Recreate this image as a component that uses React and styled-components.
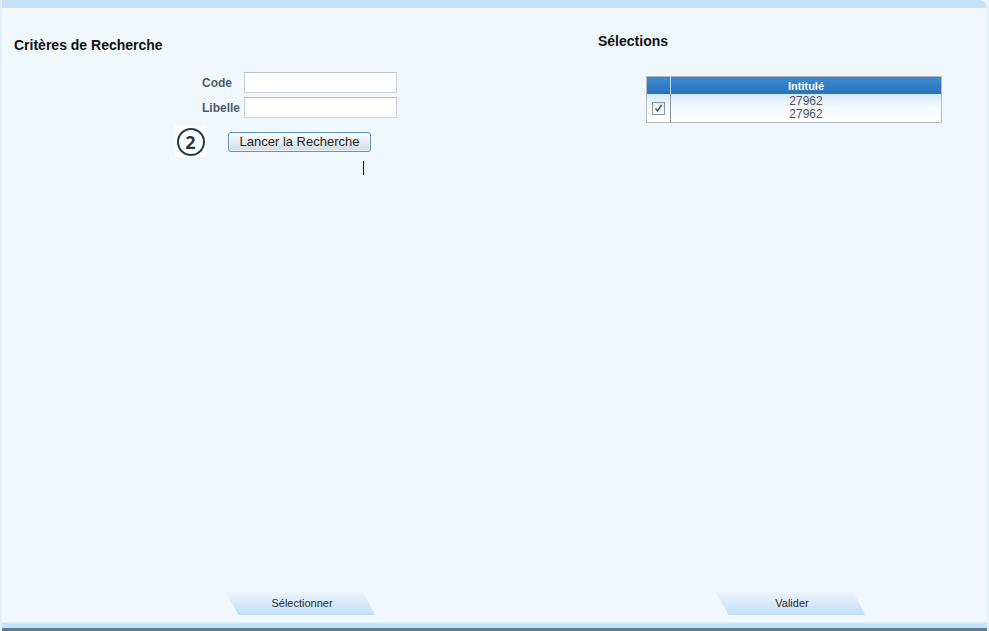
import React from 'react';
import styled, { createGlobalStyle } from 'styled-components';

const Global = createGlobalStyle`
  html, body {
    margin: 0;
    padding: 0;
    overflow: hidden;
    background: #f0f7fd;
  }
  body {
    font-family: "Liberation Sans", Arial, sans-serif;
  }
`

const Frame = styled.div`
  width: 989px;
  height: 631px;
  display: flex;
  flex-direction: column;
  background: #f0f7fd;
  box-sizing: border-box;
  border-left: 2px solid #e2eef8;
  border-right: 2px solid #e6f1fa;
`

const TopBand = styled.div`
  height: 8px;
  flex: none;
  background: #c4e1f7;
  border-bottom: 1px solid #f8fcff;
  border-top-right-radius: 8px;
`

const Content = styled.div`
  flex: 1;
  display: grid;
  grid-template-columns: 584px 1fr;
  position: relative;
`

const Column = styled.div`
  padding: ${p => p.$top}px 0 0 12px;
  position: relative;
`

const Title = styled.h2`
  margin: 0;
  font-size: 14px;
  line-height: 16px;
  font-weight: 700;
  color: #111;
`

const Form = styled.div`
  margin: 19px 0 0 188px;
  display: flex;
  flex-direction: column;
  gap: 4px;
`

const Row = styled.div`
  display: flex;
  align-items: center;
`

const Label = styled.label`
  width: 42px;
  font-size: 12px;
  font-weight: 700;
  color: #505c68;
`

const Input = styled.input`
  width: 153px;
  height: 21px;
  box-sizing: border-box;
  border: 1px solid #c9d1d8;
  border-top-color: #b9c2ca;
  background: #fff;
  margin: 0;
  padding: 0 3px;
`

const ActionRow = styled.div`
  display: flex;
  align-items: center;
  gap: 22px;
  margin: 4px 0 0 -27px;
`

const Step = styled.div`
  width: 31px;
  height: 31px;
  background: #fff;
  display: flex;
  align-items: center;
  justify-content: center;
`

const StepCircle = styled.span`
  width: 28px;
  height: 28px;
  box-sizing: border-box;
  border: 2.5px solid #233a4d;
  border-radius: 50%;
  display: flex;
  align-items: center;
  justify-content: center;
  font-family: "Open Sans", "Liberation Sans", sans-serif;
  font-weight: 700;
  font-size: 18px;
  line-height: 1;
  color: #233a4d;
`

const SearchButton = styled.button`
  width: 143px;
  height: 20px;
  box-sizing: border-box;
  padding: 0;
  border: 1px solid #5f95b8;
  border-radius: 3px;
  background: linear-gradient(#fbfcfd, #e6ebef 55%, #d4dce3);
  font-family: "Liberation Sans", Arial, sans-serif;
  font-size: 13px;
  color: #1e1e1e;
  box-shadow: inset 0 0 0 1px #eef5fa;
`

const Caret = styled.div`
  position: absolute;
  left: 361px;
  top: 152px;
  width: 1px;
  height: 14px;
  background: #111;
`

const Table = styled.table`
  margin: 27px 0 0 48px;
  width: 296px;
  border-collapse: collapse;
  border: 1px solid #b5bcc3;
  font-family: "Liberation Sans", Arial, sans-serif;
`

const Th = styled.th`
  height: 17px;
  padding: 0;
  background: linear-gradient(#3d8bd1, #2671bb);
  color: #fff;
  font-size: 11px;
  font-weight: 700;
  border-left: ${p => (p.$sep ? '1px solid #bfe2fb' : '0')};
  width: ${p => (p.$w ? `${p.$w}px` : 'auto')};
`

const Td = styled.td`
  height: 28px;
  padding: 0;
  text-align: center;
  vertical-align: middle;
  background: linear-gradient(#d5e8f7, #f3f9fd 45%, #fff);
  border-left: ${p => (p.$sep ? '1px solid #8a9299' : '0')};
  font-size: 12px;
  line-height: 13px;
  color: #555;
`

const Check = styled.span`
  display: inline-flex;
  width: 13px;
  height: 13px;
  box-sizing: border-box;
  border: 1px solid #8d959c;
  background: linear-gradient(#e6e9ec, #fafbfc);
  align-items: center;
  justify-content: center;
  vertical-align: middle;
`

const Footer = styled.div`
  flex: none;
  display: flex;
  padding-left: 223px;
  gap: 340px;
  height: 24px;
  margin-bottom: 7px;
`

const Slant = styled.div`
  width: 150px;
  height: 24px;
  clip-path: polygon(0 0, 92% 0, 100% 100%, 9% 100%);
  background: linear-gradient(#eef6fd, #d7eafa 50%, #c3dff6);
  display: flex;
  align-items: center;
  justify-content: center;
  padding-left: 4px;
  box-sizing: border-box;
  font-size: 11px;
  color: #2b2b2b;
`

const BottomBand = styled.div`
  flex: none;
  height: 5px;
  background: #c9e3f7;
  border-top: 1px solid #deeefb;
`

const BottomLine = styled.div`
  flex: none;
  height: 3px;
  background: #5c7b91;
`

const CheckMark = () => (
  <svg width="9" height="9" viewBox="0 0 9 9">
    <path d="M1.5 4.5 L3.5 7 L7.5 1" fill="none" stroke="#4d5d80" strokeWidth="1.6" />
  </svg>
)

export default function App() {
  return (
    <>
      <Global />
      <Frame>
        <TopBand />
        <Content>
          <Column $top={28}>
            <Title>Critères de Recherche</Title>
            <Form>
              <Row>
                <Label>Code</Label>
                <Input />
              </Row>
              <Row>
                <Label>Libelle</Label>
                <Input />
              </Row>
              <ActionRow>
                <Step><StepCircle>2</StepCircle></Step>
                <SearchButton>Lancer la Recherche</SearchButton>
              </ActionRow>
            </Form>
            <Caret />
          </Column>
          <Column $top={24}>
            <Title>Sélections</Title>
            <Table>
              <thead>
                <tr>
                  <Th $w={23} />
                  <Th $sep>Intitulé</Th>
                </tr>
              </thead>
              <tbody>
                <tr>
                  <Td><Check><CheckMark /></Check></Td>
                  <Td $sep>27962<br />27962</Td>
                </tr>
              </tbody>
            </Table>
          </Column>
        </Content>
        <Footer>
          <Slant>Sélectionner</Slant>
          <Slant>Valider</Slant>
        </Footer>
        <BottomBand />
        <BottomLine />
      </Frame>
    </>
  );
}
